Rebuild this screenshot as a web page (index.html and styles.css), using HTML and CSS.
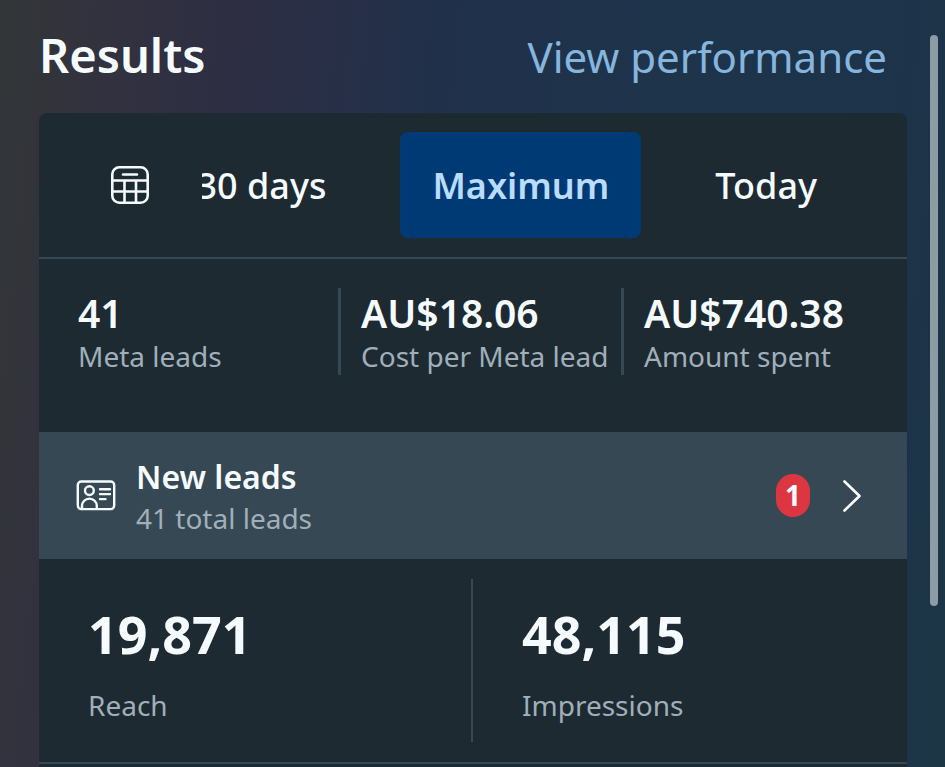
FILE: index.html
```html
<!DOCTYPE html>
<html lang="en">
<head>
    <meta charset="UTF-8">
    <meta name="viewport" content="width=device-width, initial-scale=1.0">
    <title>Results</title>
    <link rel="stylesheet" href="styles.css">
</head>
<body>
    <main class="results">
        <header class="results-header">
            <h1>Results</h1>
            <a href="#performance" class="view-link">View performance</a>
        </header>

        <section class="card">
            <div class="range">
                <button type="button" class="calendar-button" aria-label="Choose dates">
                    <svg viewBox="0 0 40 40" fill="none" stroke="currentColor" stroke-width="2.6" stroke-linecap="round">
                        <rect x="2.3" y="2.3" width="35.4" height="35.4" rx="7" />
                        <path d="M13 9.500h14M2.3 15.500h35.4M2.3 26.500h35.4M14.500 15.500v22.200M26 15.500v22.200" />
                    </svg>
                </button>
                <div class="range-tabs">
                    <button type="button" class="tab">30 days</button>
                    <button type="button" class="tab active">Maximum</button>
                    <button type="button" class="tab">Today</button>
                </div>
            </div>

            <div class="metrics">
                <div class="metric">
                    <div class="metric-value">41</div>
                    <div class="label">Meta leads</div>
                </div>
                <div class="metric">
                    <div class="metric-value">AU$18.06</div>
                    <div class="label">Cost per Meta lead</div>
                </div>
                <div class="metric">
                    <div class="metric-value">AU$740.38</div>
                    <div class="label">Amount spent</div>
                </div>
            </div>

            <a href="#leads" class="leads">
                <svg class="leads-icon" viewBox="0 0 40 32" fill="none" stroke="currentColor" stroke-width="2.4" stroke-linecap="round">
                    <rect x="1.8" y="1.500" width="36.4" height="27.6" rx="3.5" />
                    <circle cx="13.4" cy="10.600" r="4.4" />
                    <path d="M6 28.500v-2.500a7.400 7.400 0 0 1 14.800 0V28.500M24 9.300h10M24 14.100h10M24 19.100h5.500" />
                </svg>
                <div class="leads-text">
                    <div class="leads-title">New leads</div>
                    <div class="label">41 total leads</div>
                </div>
                <span class="badge">1</span>
                <svg class="chevron" viewBox="0 0 20 34" fill="none" stroke="currentColor" stroke-width="2.6" stroke-linecap="round" stroke-linejoin="round">
                    <path d="M2.500 2.500L17.500 17L2.500 31.500" />
                </svg>
            </a>

            <div class="totals">
                <div class="total">
                    <div class="total-value">19,871</div>
                    <div class="label">Reach</div>
                </div>
                <div class="total">
                    <div class="total-value">48,115</div>
                    <div class="label">Impressions</div>
                </div>
            </div>
        </section>
    </main>
    <div class="scroll-thumb"></div>
</body>
</html>
```

FILE: styles.css
```css
:root {
    --card: #1d2a32;
    --row: #354853;
    --line: #354853;
    --foreground: #f5fbff;
    --muted: #a0afba;
    --link: #86b5de;
    --active: #003a75;
    --active-foreground: #b9dcff;
    --badge: #dc3640;
}

* {
    box-sizing: border-box;
}

body {
    margin: 0;
    min-height: 100vh;
    overflow: hidden;
    position: relative;
    font-family: "Noto Sans", "Open Sans", sans-serif;
    color: var(--foreground);
    background: linear-gradient(96deg, #323638 0%, #32343a 5%, #32323f 10%, #2d2e43 24%, #20304a 44%, #1e344b 65%, #1d3349 90%, #1c3645 100%);
}

button {
    padding: 0;
    border: none;
    background: none;
    color: inherit;
    font-family: inherit;
    cursor: pointer;
}

a {
    color: inherit;
    text-decoration: none;
}

svg {
    display: block;
}

.results {
    display: flex;
    flex-direction: column;
    min-height: 100vh;
    padding: 0 38px 0 39px;
}

.results-header {
    display: flex;
    justify-content: space-between;
    align-items: flex-start;
    height: 113px;
    padding: 27px 20px 0 0;
}

h1 {
    margin: 0;
    font-size: 47px;
    font-weight: 600;
    line-height: 56px;
}

.view-link {
    font-size: 42px;
    line-height: 60px;
    color: var(--link);
}

.card {
    flex: 1;
    background-color: var(--card);
    border-radius: 8px 8px 0 0;
}

.range {
    display: flex;
    align-items: center;
    padding: 19px 0;
    border-bottom: 2px solid var(--line);
}

.calendar-button {
    flex: none;
    width: 40px;
    margin: 0 52px 0 71px;
}

.range-tabs {
    flex: 1;
    min-width: 0;
    display: flex;
    justify-content: flex-end;
    gap: 42px;
    padding-right: 58px;
    overflow: hidden;
}

.tab {
    flex: none;
    height: 106px;
    padding: 0 32px;
    border-radius: 8px;
    font-size: 36px;
    font-weight: 500;
}

.tab.active {
    background-color: var(--active);
    color: var(--active-foreground);
    font-weight: 600;
}

.metrics {
    display: grid;
    grid-template-columns: repeat(3, 1fr);
    padding: 29px 3px 57px 16px;
}

.metric {
    padding-left: 20px;
    border-left: 3px solid var(--line);
    white-space: nowrap;
}

.metric:first-child {
    border-color: transparent;
}

.metric-value {
    font-size: 39px;
    font-weight: 600;
    line-height: 50px;
}

.label {
    font-size: 28px;
    line-height: 37px;
    color: var(--muted);
}

.leads {
    display: flex;
    align-items: center;
    padding: 22px 45px 22px 37px;
    background-color: var(--row);
}

.leads-icon {
    width: 40px;
    height: 32px;
    margin-right: 20px;
}

.leads-text {
    flex: 1;
}

.leads-title {
    font-size: 32px;
    font-weight: 600;
    line-height: 46px;
}

.badge {
    width: 34px;
    margin-right: 32px;
    border-radius: 17px;
    background-color: var(--badge);
    font-size: 28px;
    font-weight: 700;
    line-height: 43px;
    text-align: center;
}

.chevron {
    width: 20px;
    height: 34px;
}

.totals {
    display: grid;
    grid-template-columns: 1fr 1fr;
    padding: 20px 0;
    border-bottom: 2px solid var(--line);
}

.total {
    padding: 20px 0 18px 49px;
}

.total:first-child {
    border-right: 2px solid var(--line);
}

.total-value {
    margin-bottom: 18px;
    font-size: 52px;
    font-weight: 700;
    line-height: 70px;
}

/* overlay scroll indicator */
.scroll-thumb {
    position: absolute;
    top: 35px;
    right: 7px;
    width: 8px;
    height: 571px;
    border-radius: 4px;
    background-color: #8d9ba5;
}
```
